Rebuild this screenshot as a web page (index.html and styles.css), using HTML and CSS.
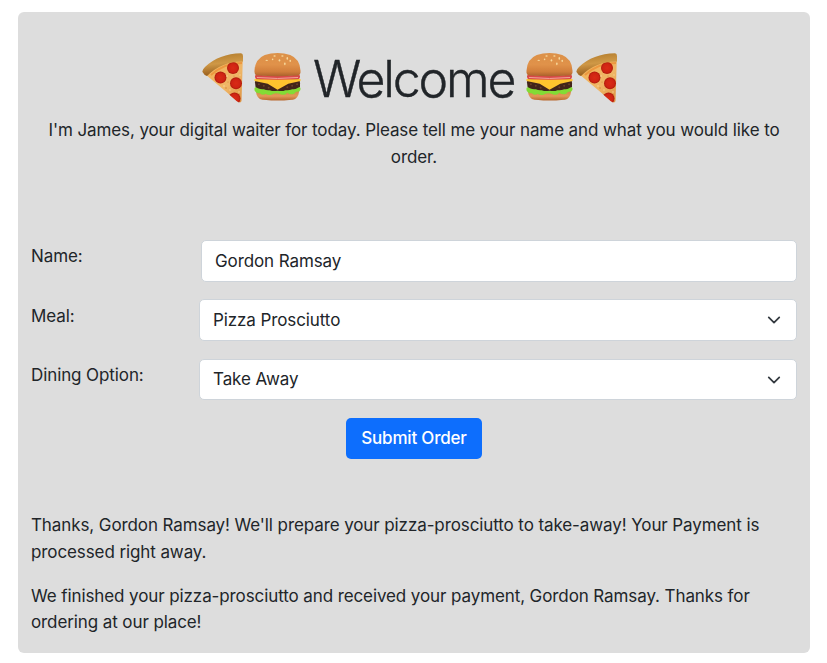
FILE: index.html
```html
<!DOCTYPE html>
<html lang="en">
<head>
<meta charset="utf-8">
<title>Welcome</title>
<link rel="stylesheet" href="styles.css">
</head>
<body>
<svg class="defs" width="0" height="0" aria-hidden="true">
  <defs>
    <linearGradient id="bun" x1="0" y1="0" x2="0" y2="1"><stop offset="0" stop-color="#dc9148"/><stop offset=".5" stop-color="#e0924a"/><stop offset=".8" stop-color="#d17e3b"/><stop offset="1" stop-color="#a9602b"/></linearGradient>
    <linearGradient id="base" x1="0" y1="0" x2="0" y2="1"><stop offset="0" stop-color="#c9813f"/><stop offset=".6" stop-color="#e29a58"/><stop offset="1" stop-color="#b9682f"/></linearGradient>
    <linearGradient id="cheese" x1="0" y1="0" x2="1" y2="1"><stop offset="0" stop-color="#f3b356"/><stop offset=".6" stop-color="#efb667"/><stop offset="1" stop-color="#dc9140"/></linearGradient>
    <radialGradient id="pep"><stop offset="0" stop-color="#d92b16"/><stop offset=".7" stop-color="#cf2413"/><stop offset="1" stop-color="#ad1c0c"/></radialGradient>
    <linearGradient id="crust" x1=".3" y1="0" x2=".5" y2="1"><stop offset="0" stop-color="#b27c2c"/><stop offset=".45" stop-color="#cf9846"/><stop offset="1" stop-color="#8f5516"/></linearGradient>
    <clipPath id="slice"><path d="M3 21Q18 7 40.8 7L39.5 49Q38 51 34.5 48L22 37Z"/></clipPath>
    <symbol id="pizza" viewBox="0 0 41 50" preserveAspectRatio="none">
      <path d="M3 21Q18 7 40.8 7L39.5 48Q38.5 51 34.5 47.5L22 37Z" fill="url(#cheese)"/>
      <g clip-path="url(#slice)">
        <path d="M9 22Q22 10 40 10" fill="none" stroke="#e98a30" stroke-width="2" opacity=".7"/>
        <g fill="url(#pep)"><circle cx="31" cy="15" r="6"/><circle cx="18.5" cy="24.5" r="6"/><circle cx="34" cy="30.3" r="6"/><circle cx="32.5" cy="45.5" r="6"/></g>
        <g fill="#f9d59a"><circle cx="25" cy="23" r=".8"/><circle cx="22" cy="33" r=".8"/><circle cx="28" cy="37" r=".7"/><circle cx="38" cy="22" r=".7"/><circle cx="37" cy="39" r=".7"/></g>
        <g fill="#ce7d35"><circle cx="24" cy="35" r=".7"/><circle cx="26" cy="29" r=".5"/><circle cx="32" cy="23" r=".5"/></g>
      </g>
      <path d="M.5 19Q-.1 17 3 14Q17 .8 39 .3Q41 .4 41 3V8.5Q20 8 5 23Q2 22 .5 19Z" fill="url(#crust)"/>
    </symbol>
    <symbol id="burger" viewBox="0 0 48 49" preserveAspectRatio="none">
      <path d="M2 37Q1.5 44 6 47Q10 48.5 24 48.5Q39 48.5 42 47Q46.5 44 46 37Z" fill="url(#base)"/>
      <path d="M1 30Q1 26 5 26H43Q47 26 47 31V34Q46 38 41 39H8Q2 38 1.5 34Z" fill="#42251a"/>
      <g fill="#6b402a"><circle cx="5" cy="32" r="1"/><circle cx="10" cy="33.5" r="1"/><circle cx="15" cy="35.5" r="1"/><circle cx="34" cy="35" r="1"/><circle cx="39" cy="33.5" r="1"/><circle cx="44" cy="32" r="1"/></g>
      <path d="M.5 36Q1 34 4 36Q7 37.5 10 37Q13 38.5 16 38Q20 39.5 24 38.5Q29 39.5 32 38Q36 38.5 39 37Q42 37.5 44 36Q47 34 47.5 36Q48 38 46 39.5Q43 39 41 41.5Q37 43 34 40.5Q31 44 27 42Q23 40 19 42Q15 44 12 41.5Q9 44 6 41Q2 41.5 .5 38Z" fill="#82dc35"/>
      <path d="M2 22Q24 25 46 22Q48 24 46 26.5Q24 30 2 26.5Q0 24 2 22Z" fill="#d94a49"/>
      <path d="M3 25Q24 27 45 25" fill="none" stroke="#f2a59b" stroke-width="1"/>
      <path d="M.5 26.5Q24 28 47.5 26.5V28.5L35 31.5L24 37.5L14 31.5L.5 28.5Z" fill="#ffc42e"/>
      <path d="M.5 18Q1 6 11 2Q17 0 24 0Q31 0 37 2Q47 6 47.5 18Q48 22.5 44 23Q24 24.5 4 23Q0 22.5 .5 18Z" fill="url(#bun)"/>
      <g fill="#f7d99d"><ellipse cx="21" cy="3" rx="1.2" ry=".8"/><ellipse cx="29" cy="3" rx="1.2" ry=".8"/><ellipse cx="34" cy="5.5" rx=".8" ry="1.3"/><ellipse cx="19" cy="6.5" rx=".8" ry="1"/><ellipse cx="13" cy="7.5" rx="1.3" ry=".7"/><ellipse cx="26" cy="7.5" rx=".8" ry="1.2"/><ellipse cx="37" cy="8" rx=".8" ry="1.2"/><ellipse cx="31.5" cy="11" rx=".8" ry="1.4"/></g>
    </symbol>
  </defs>
</svg>
<main class="card">
  <header>
    <h1 class="title">
      <svg class="pizza" aria-hidden="true"><use href="#pizza"/></svg>
      <svg class="burger" aria-hidden="true"><use href="#burger"/></svg>
      <span class="word">Welcome</span>
      <svg class="burger" aria-hidden="true"><use href="#burger"/></svg>
      <svg class="pizza" aria-hidden="true"><use href="#pizza"/></svg>
    </h1>
    <p class="intro">I'm James, your digital waiter for today. Please tell me your name and what you would like to<br>order.</p>
  </header>
  <form class="form">
    <div class="row row-name">
      <label for="name">Name:</label>
      <input class="control" id="name" type="text" value="Gordon Ramsay">
    </div>
    <div class="row row-meal">
      <label for="meal">Meal:</label>
      <div class="select">
        <select class="control" id="meal"><option>Pizza Prosciutto</option></select>
        <svg class="chevron" viewBox="0 0 16 16" aria-hidden="true"><path d="m2 5 6 6 6-6"/></svg>
      </div>
    </div>
    <div class="row row-dining">
      <label for="dining">Dining Option:</label>
      <div class="select">
        <select class="control" id="dining"><option>Take Away</option></select>
        <svg class="chevron" viewBox="0 0 16 16" aria-hidden="true"><path d="m2 5 6 6 6-6"/></svg>
      </div>
    </div>
    <button class="submit" type="button">Submit Order</button>
  </form>
  <section class="messages">
    <p class="thanks">Thanks, Gordon Ramsay! We'll prepare your pizza-prosciutto to take-away! Your Payment is<br>processed right away.</p>
    <p class="finished">We finished your pizza-prosciutto and received your payment, Gordon Ramsay. Thanks for<br>ordering at our place!</p>
  </section>
</main>
</body>
</html>
```
FILE: styles.css
```css
* { box-sizing: border-box; }
body {
  margin: 0;
  padding: 12px 17px 10px 18px;
  background: #fff;
  color: #212529;
  font: 400 17px/26.5px Inter, "Liberation Sans", sans-serif;
  letter-spacing: -0.1px;
}
.defs { position: absolute; }
.card {
  height: 641px;
  padding: 41px 13px 0;
  border-radius: 6px;
  background: #ddd;
}
p { margin: 0; white-space: nowrap; }
.title {
  display: flex;
  height: 64px;
  margin: 0 0 0 170.5px;
  font-size: 50px;
  font-weight: 300;
  line-height: 52px;
}
.title svg { flex: none; }
.pizza { width: 41px; height: 50px; }
.burger { width: 47px; height: 48px; margin-left: 11.5px; }
.word {
  width: 199px;
  margin-left: 12px;
  letter-spacing: -2.2px;
  white-space: nowrap;
  -webkit-text-stroke: 0.4px #212529;
}
.word + .burger { margin: 0 3px 0 14px; }
.intro { text-align: center; }
.form { display: flex; flex-direction: column; margin-top: 70px; }
.row { display: grid; grid-template-columns: 168px 1fr; height: 59.5px; }
.row-name { grid-template-columns: 170px 1fr; height: 59px; }
.row-dining { height: 59px; }
label { padding-top: 3px; }
.row-meal label { padding-top: 4px; }
.select { position: relative; }
.control {
  display: block;
  width: 100%;
  height: 42px;
  margin: 0;
  padding: 0 13px;
  border: 1px solid #ced4da;
  border-radius: 5px;
  background: #fff;
  color: #212529;
  font: inherit;
  letter-spacing: inherit;
  appearance: none;
}
.row-dining .control { height: 41px; }
.chevron {
  position: absolute;
  top: 14px;
  right: 16px;
  width: 14px;
  height: 14px;
  fill: none;
  stroke: #343a40;
  stroke-width: 2;
  stroke-linecap: round;
  stroke-linejoin: round;
  pointer-events: none;
}
.submit {
  align-self: center;
  width: 136px;
  height: 41px;
  padding: 0;
  border: 0;
  border-radius: 5px;
  background: #0d6efd;
  color: #fff;
  font: inherit;
  font-weight: 500;
  letter-spacing: -0.2px;
}
.messages { margin-top: 53px; }
.thanks { line-height: 27px; }
.finished { margin-top: 17px; }
```
